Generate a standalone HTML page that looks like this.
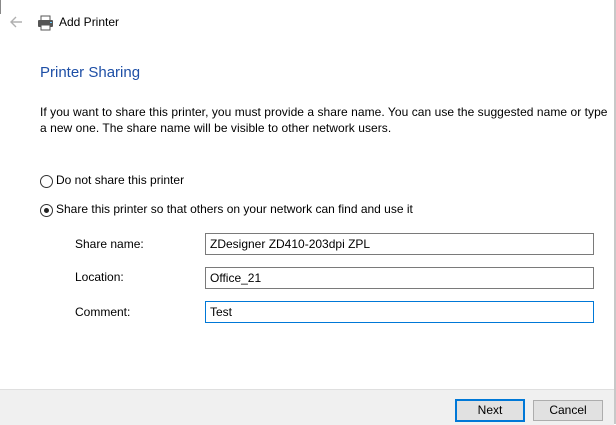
<!DOCTYPE html>
<html><head><style>
body{margin:0;width:616px;height:424px;position:relative;background:#fff;font-family:"Segoe UI","Liberation Sans",sans-serif;font-size:12px;color:#000;overflow:hidden}
.a{position:absolute;white-space:nowrap}
.box{position:absolute;left:205px;width:383px;height:20px;border:1px solid #7a7a7a;line-height:20px;padding-left:4px;box-sizing:content-box}
.rad{position:absolute;width:11px;height:11px;border:1px solid #333;border-radius:50%;background:#fff}
.btn{position:absolute;top:400px;height:19px;border:1px solid #adadad;background:#e1e1e1;text-align:center;line-height:19px}
</style></head><body>
<div class="a" style="left:0;top:0;width:1px;height:14px;background:#888"></div>
<div class="a" style="right:0;top:0;width:2px;height:424px;background:#c8c8c8"></div>
<svg class="a" style="left:9px;top:15px" width="14" height="14" viewBox="0 0 14 14"><path d="M13 7H2M7 2L2 7l5 5" stroke="#b0b0b0" stroke-width="1.4" fill="none"/></svg>
<svg class="a" style="left:37px;top:15px" width="17" height="16" viewBox="0 0 17 16"><rect x="4" y="1" width="9" height="5" fill="#fff" stroke="#555"/><rect x="1" y="5" width="15" height="7" rx="1" fill="#555"/><rect x="4" y="10" width="9" height="5" fill="#fff" stroke="#555"/><rect x="13" y="7" width="2" height="1" fill="#6cf"/></svg>
<div class="a" style="left:59px;top:15px;font-size:12px">Add Printer</div>
<div class="a" style="left:40px;top:64px;font-size:15px;color:#1e4fa6">Printer Sharing</div>
<div class="a" style="left:40px;top:104px;line-height:16px;letter-spacing:0.05px">If you want to share this printer, you must provide a share name. You can use the suggested name or type<br>a new one. The share name will be visible to other network users.</div>
<div class="rad" style="left:40px;top:175px"></div>
<div class="a" style="left:56px;top:173px">Do not share this printer</div>
<div class="rad" style="left:40px;top:204px"><div style="position:absolute;left:3px;top:3px;width:5px;height:5px;border-radius:50%;background:#222"></div></div>
<div class="a" style="left:56px;top:202px">Share this printer so that others on your network can find and use it</div>
<div class="a" style="left:75px;top:237px">Share name:</div>
<div class="a" style="left:75px;top:270px">Location:</div>
<div class="a" style="left:75px;top:305px">Comment:</div>
<div class="box" style="top:233px">ZDesigner ZD410-203dpi ZPL</div>
<div class="box" style="top:267px">Office_21</div>
<div class="box" style="top:301px;border-color:#0078d7">Test</div>
<div class="a" style="left:0;top:389px;width:614px;height:35px;background:#f0f0f0;border-top:1px solid #dfdfdf"></div>
<div class="btn" style="left:455px;width:66px;border:2px solid #0078d7;top:399px">Next</div>
<div class="btn" style="left:533px;width:68px">Cancel</div>
</body></html>
